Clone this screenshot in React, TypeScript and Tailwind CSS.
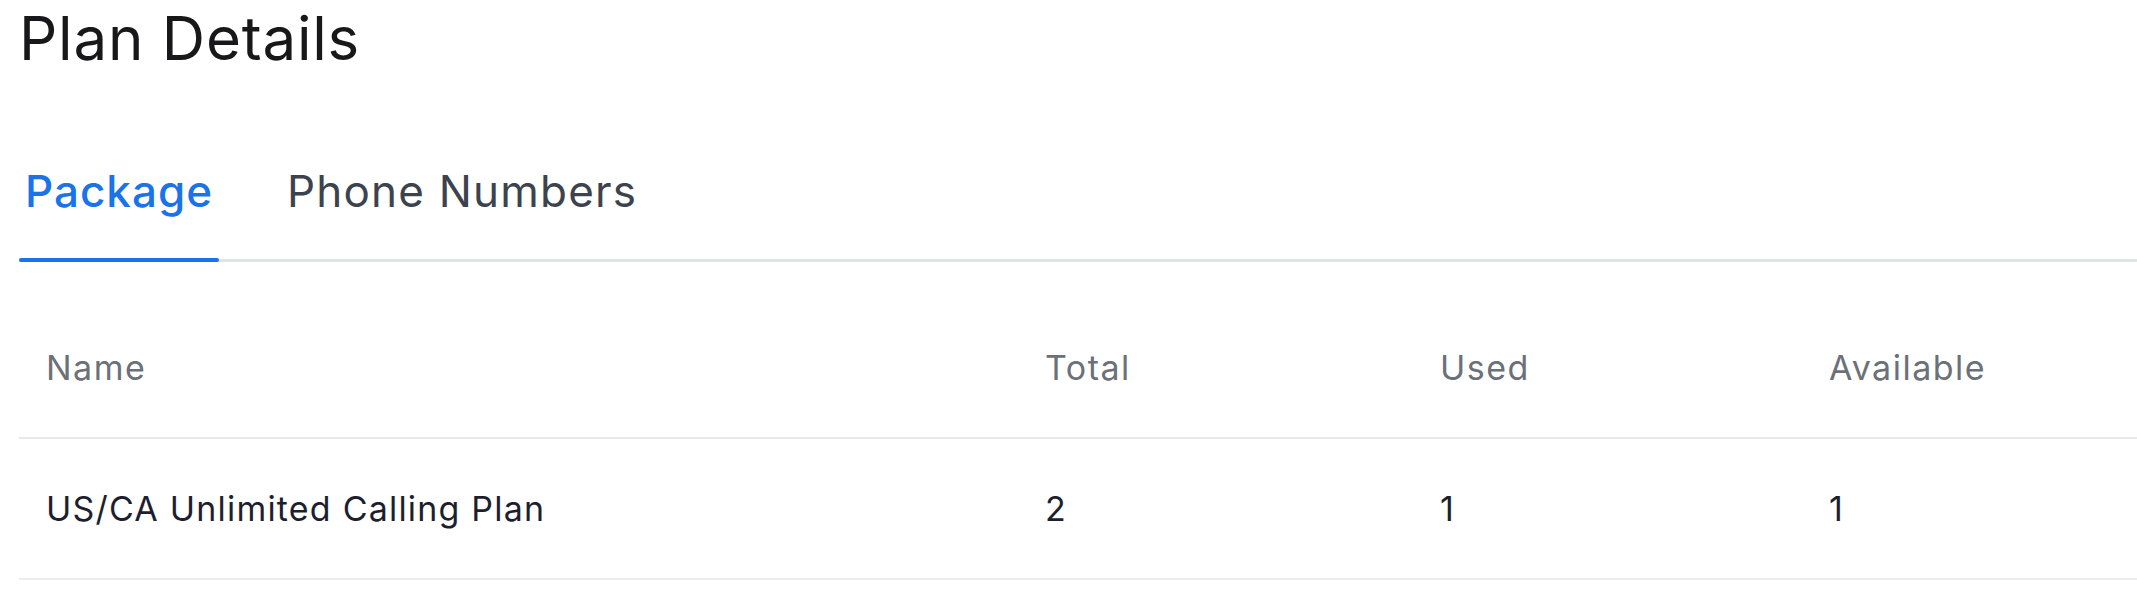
import React, { useState } from 'react';

const rows = [{ name: 'US/CA Unlimited Calling Plan', total: 2, used: 1, available: 1 }];

export default function App() {
  const [tab, setTab] = useState<'package' | 'numbers'>('package');

  return (
    <div className="min-h-screen bg-white pl-[19px] font-['Inter',sans-serif]">
      <h1 className="pt-[9px] text-[60px] leading-[59px] font-normal text-[#18181b] tracking-[0.8px]">Plan Details</h1>

      {/* Tabs */}
      <div className="mt-[99px] flex border-b-[3px] border-[#e1e3e8]">
        <button
          onClick={() => setTab('package')}
          className={`relative w-[200px] h-[92px] text-[44px] leading-[44px] tracking-[1px] text-center pb-[44px] ${
            tab === 'package' ? 'text-[#1a73e8] font-medium' : 'text-[#3d434d]'
          }`}
        >
          Package
          {tab === 'package' && <span className="absolute left-0 right-0 -bottom-[3px] h-[4px] rounded-full bg-[#1a73e8]" />}
        </button>
        <button
          onClick={() => setTab('numbers')}
          className={`relative ml-[59px] px-[9px] h-[92px] text-[44px] leading-[44px] tracking-[1.2px] pb-[44px] ${
            tab === 'numbers' ? 'text-[#1a73e8] font-medium' : 'text-[#3d434d]'
          }`}
        >
          Phone Numbers
          {tab === 'numbers' && <span className="absolute left-0 right-0 -bottom-[3px] h-[4px] rounded-full bg-[#1a73e8]" />}
        </button>
      </div>

      {/* Table */}
      <div className="mt-[36px]">
        <div className="grid grid-cols-[999px_395px_389px_1fr] h-[141px] items-center border-b-2 border-[#e8e9ee] text-[34px] tracking-[1.5px] text-[#6b7079]">
          <div className="pl-[27px]">Name</div>
          <div className="pl-[27px]">Total</div>
          <div className="pl-[27px]">Used</div>
          <div className="pl-[27px]">Available</div>
        </div>
        {rows.map((r) => (
          <div
            key={r.name}
            className="grid grid-cols-[999px_395px_389px_1fr] h-[141px] items-center border-b-2 border-[#ededf0] text-[34px] tracking-[1.2px] text-[#1e1f2e]"
          >
            <div className="pl-[27px]">{r.name}</div>
            <div className="pl-[27px]">{r.total}</div>
            <div className="pl-[27px]">{r.used}</div>
            <div className="pl-[27px]">{r.available}</div>
          </div>
        ))}
      </div>
    </div>
  );
}
